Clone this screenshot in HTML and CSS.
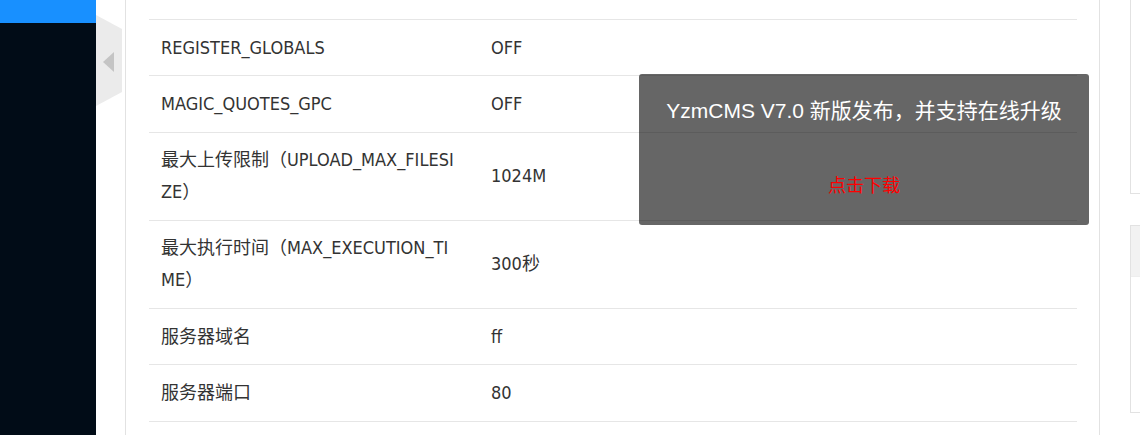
FILE: index.html
```html
<!DOCTYPE html>
<html lang="zh-CN">
<head>
<meta charset="utf-8">
<title>系统信息</title>
<link rel="stylesheet" href="styles.css">
</head>
<body>
<div class="app">
  <aside class="side">
    <div class="side-top"></div>
  </aside>
  <div class="shrink">
    <svg width="28" height="96" viewBox="0 0 28 96">
      <polygon points="0,0 26,14 26,77 0,91" fill="#ebebeb"/>
      <polygon points="7,47 18,37 18,57" fill="#c4c4c4"/>
    </svg>
  </div>
  <main class="main">
    <section class="card">
      <table class="info">
        <colgroup><col class="c1"><col class="c2"></colgroup>
        <tr class="spacer"><td></td><td></td></tr>
        <tr><td>REGISTER_GLOBALS</td><td>OFF</td></tr>
        <tr><td>MAGIC_QUOTES_GPC</td><td>OFF</td></tr>
        <tr><td>最大上传限制（UPLOAD_MAX_FILESIZE）</td><td>1024M</td></tr>
        <tr><td>最大执行时间（MAX_EXECUTION_TIME）</td><td>300秒</td></tr>
        <tr><td>服务器域名</td><td>ff</td></tr>
        <tr><td>服务器端口</td><td>80</td></tr>
        <tr class="spacer"><td></td><td></td></tr>
      </table>
    </section>
    <div class="rcol">
      <div class="rcard rcard-top"></div>
      <div class="rcard rcard-next">
        <div class="rcard-head"></div>
      </div>
    </div>
  </main>
  <div class="layer">
    <div class="layer-title">YzmCMS V7.0 新版发布，并支持在线升级</div>
    <div class="layer-body"><a class="layer-link" href="#">点击下载</a></div>
  </div>
</div>
</body>
</html>
```
FILE: styles.css
```css
html, body {
  margin: 0;
  padding: 0;
  background: #fff;
  overflow: hidden;
}
.app {
  position: relative;
  display: flex;
  width: 1140px;
  height: 435px;
  overflow: hidden;
  font-family: "DejaVu Sans Condensed", "Noto Sans CJK SC", sans-serif;
}
.side {
  flex: 0 0 96px;
  background: #010c17;
}
.side-top {
  height: 23px;
  background: #1890ff;
}
.shrink {
  position: absolute;
  left: 96px;
  top: 15px;
  width: 28px;
  height: 96px;
}
.shrink svg {
  display: block;
}
.main {
  flex: 1 1 auto;
  display: flex;
  gap: 30px;
  padding-left: 29px;
  min-width: 0;
  overflow: hidden;
}
.card {
  flex: 0 0 975px;
  box-sizing: border-box;
  height: 460px;
  border-left: 1px solid #e2e2e2;
  border-right: 1px solid #e2e2e2;
  padding: 0 21px 0 23px;
}
.info {
  width: 928px;
  border-collapse: collapse;
  table-layout: fixed;
  color: #333;
  font-size: 18px;
  line-height: 32px;
}
.c1 { width: 330px; }
.info td {
  padding: 11.65px 12px;
  border-bottom: 1px solid #e6e6e6;
  word-break: break-all;
  vertical-align: middle;
}
.info td:first-child {
  padding-right: 20px;
}
.info .spacer td {
  padding: 0;
  height: 19px;
  line-height: 19px;
}
.info tr.spacer:last-child td {
  border-bottom: 0;
}
.rcol {
  flex: 0 0 300px;
  display: flex;
  flex-direction: column;
  gap: 31px;
}
.rcard {
  box-sizing: border-box;
  border: 1px solid #e2e2e2;
}
.rcard-top {
  height: 194px;
  border-top: 0;
}
.rcard-next {
  height: 188px;
}
.rcard-head {
  height: 50px;
  background: #f2f2f2;
  border-bottom: 1px solid #eee;
}
.layer {
  position: absolute;
  left: 639px;
  top: 74px;
  width: 450px;
  height: 151px;
  box-sizing: border-box;
  background: rgba(0, 0, 0, 0.6);
  border-radius: 3px;
  display: flex;
  flex-direction: column;
  align-items: center;
}
.layer-title {
  margin-top: 23px;
  color: #fff;
  font-family: "Liberation Sans", "Noto Sans CJK SC", sans-serif;
  font-size: 21px;
  line-height: 28px;
}
.layer-body {
  margin-top: 49px;
}
.layer-link {
  color: #f00;
  text-decoration: none;
  font-family: "Liberation Sans", "Noto Sans CJK SC", sans-serif;
  font-size: 18px;
  line-height: 24px;
}
```
